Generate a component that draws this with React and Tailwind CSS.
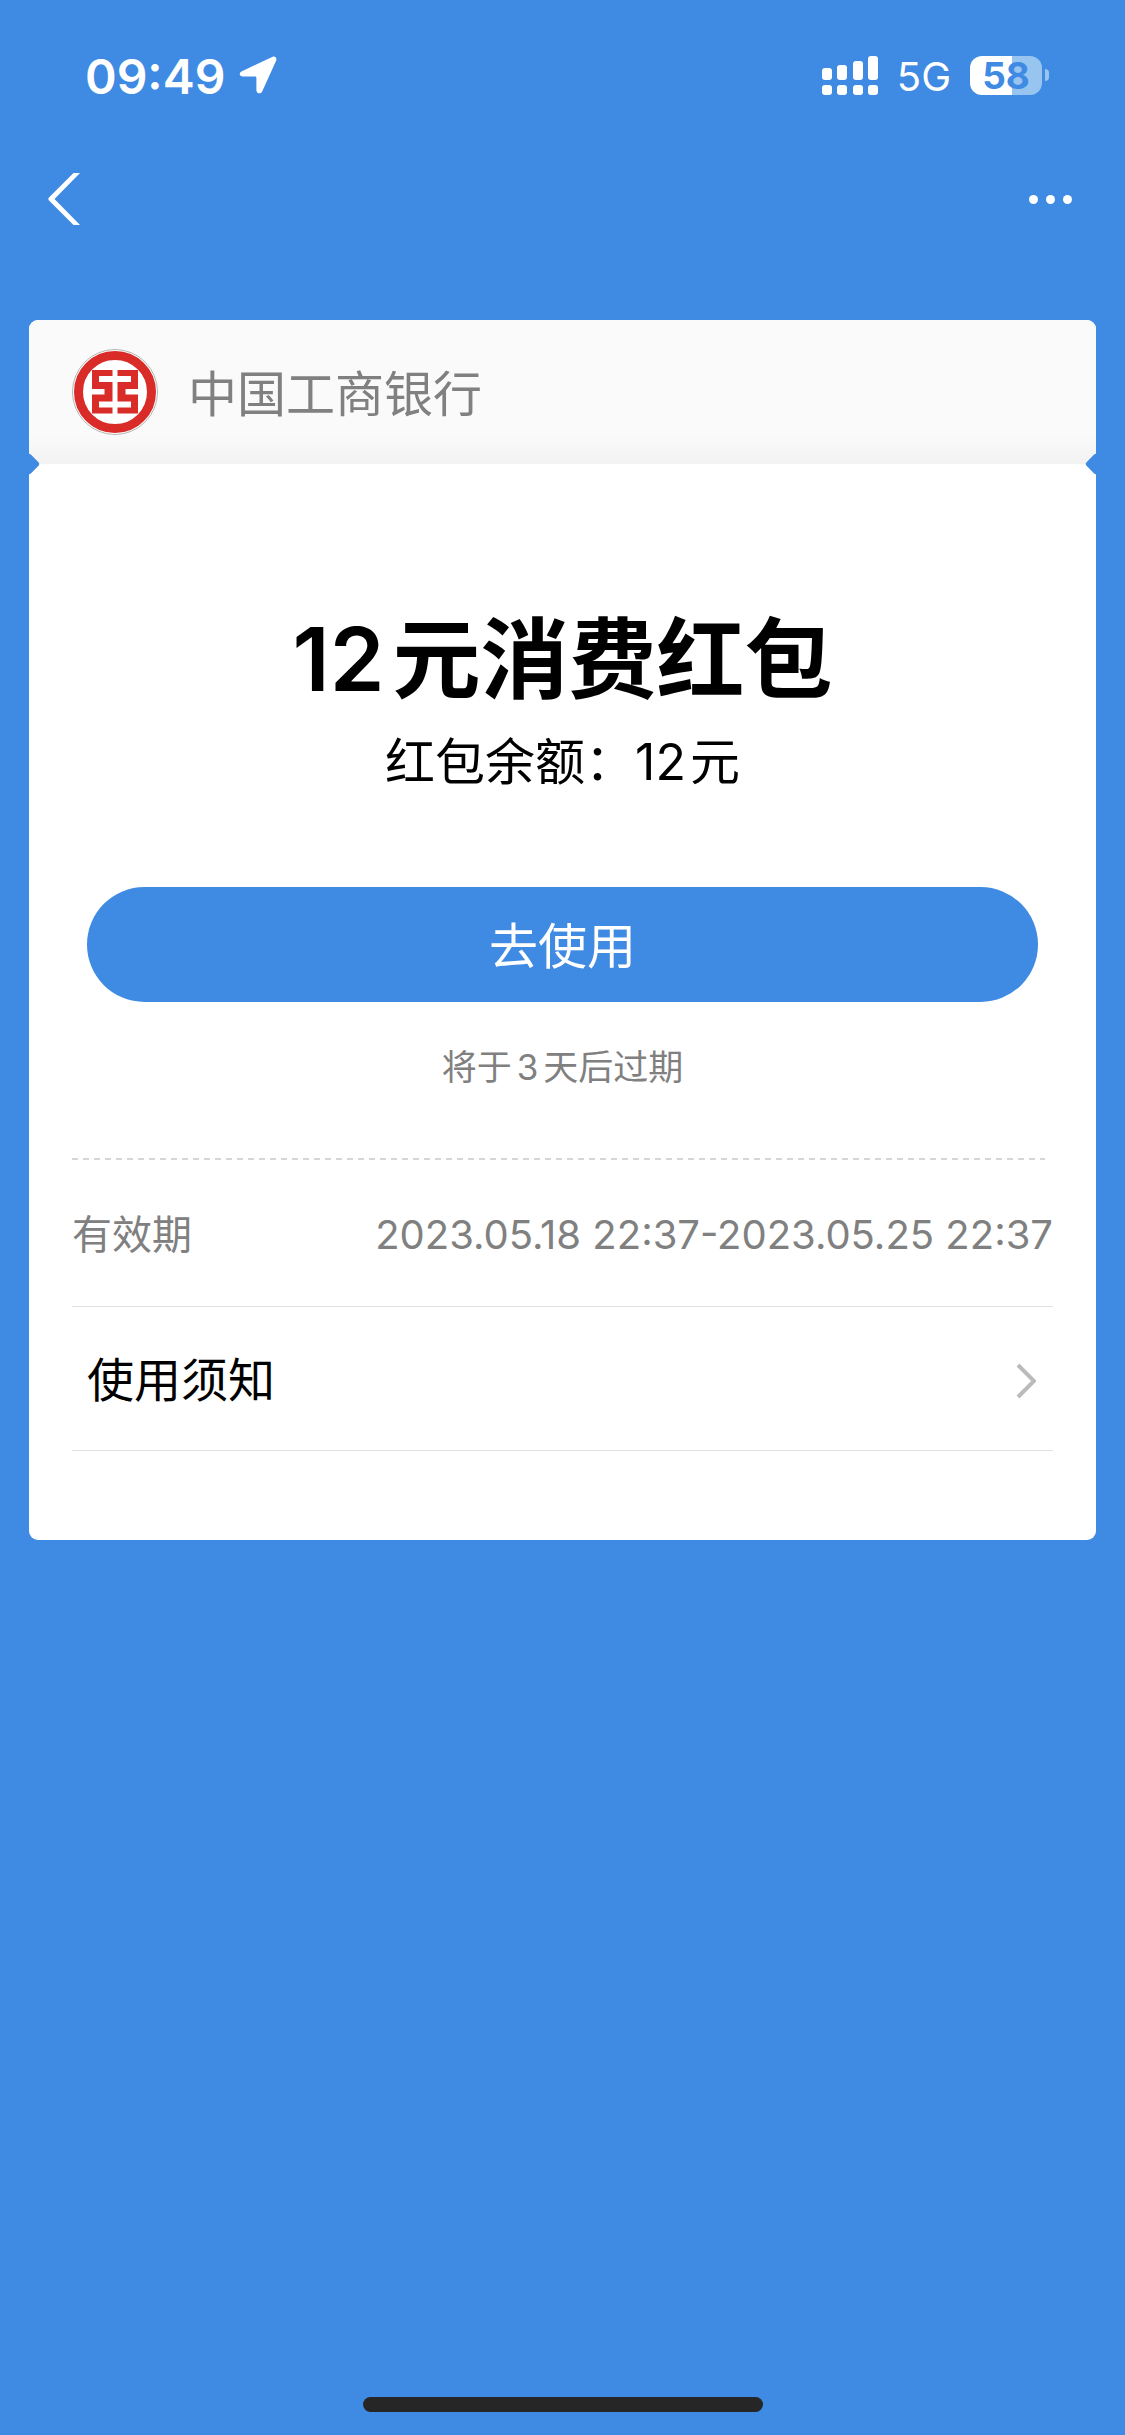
function LocationIcon() {
  return (
    <svg viewBox="0 0 38 38" className="h-[38px] w-[38px]" aria-hidden="true">
      <path
        d="M3 15.2 33.2 .9c3-1.2 5 .9 3.9 3.8L23.3 35.2c-1.4 3.2-5.9 2.6-5.9-1V22.2c0-1.2-.5-1.6-1.6-1.6H4c-4 0-4.300-4-1-5.400Z"
        fill="white"
      />
    </svg>
  );
}

function SignalIcon() {
  return (
    <svg viewBox="0 0 56 39" className="h-[39px] w-14" fill="white" role="img" aria-label="信号">
      <rect x="0" y="12" width="10" height="12" rx="3" />
      <rect x="15" y="9" width="10" height="15" rx="3" />
      <rect x="31" y="5" width="10" height="19" rx="3" />
      <rect x="46" y="0" width="10" height="24" rx="3" />
      <rect x="0" y="29" width="10" height="10" rx="3" />
      <rect x="15" y="29" width="10" height="10" rx="3" />
      <rect x="31" y="29" width="10" height="10" rx="3" />
      <rect x="46" y="29" width="10" height="10" rx="3" />
    </svg>
  );
}

function Battery() {
  return (
    <div className="flex items-center gap-[3px]">
      <div className="flex h-[39px] w-[72px] items-center justify-center rounded-xl bg-linear-to-r from-white from-58% to-[#98c4f0] to-58% text-[37px] font-bold leading-none text-[#3f8be3]">
        58
      </div>
      <div className="h-3 w-1 rounded-r-full bg-[#98c4f0]" />
    </div>
  );
}

function StatusBar() {
  return (
    <div className="flex h-[150px] items-center justify-between pr-[76px] pl-[85px] text-white">
      <div className="flex items-center gap-[14px]">
        <span className="pt-1 text-[48px] font-semibold leading-[52px]">09:49</span>
        <LocationIcon />
      </div>
      <div className="flex items-center gap-[19px]">
        <SignalIcon />
        <span className="pt-1 text-[40px] leading-none">5G</span>
        <Battery />
      </div>
    </div>
  );
}

function NavBar() {
  return (
    <nav className="flex h-[98px] items-center justify-between pr-[53px] pl-12">
      <button type="button" aria-label="返回">
        <svg viewBox="0 0 32 52" className="h-[52px] w-8" aria-hidden="true">
          <path d="M25.500 0H32L6.500 26 32 52H25.500L0.500 27V25Z" fill="white" />
        </svg>
      </button>
      <button type="button" aria-label="更多" className="flex gap-2">
        <span className="size-[9px] rounded-full bg-white" />
        <span className="size-[9px] rounded-full bg-white" />
        <span className="size-[9px] rounded-full bg-white" />
      </button>
    </nav>
  );
}

function BankLogo() {
  return (
    <svg viewBox="0 0 86 86" className="size-[86px]" role="img" aria-label="中国工商银行">
      <circle cx="43" cy="43" r="42.500" fill="white" stroke="#b5b5b5" />
      <circle cx="43" cy="43" r="36.500" fill="white" stroke="#d92b27" strokeWidth="9" />
      <g fill="#d92b27">
        <path d="M20 21H40.500V27H27V33H40.500V52.500H27V58.500H40.500V64.500H20V45.500H32.500V40H20Z" />
        <path d="M66 21H45.500V27H59V33H45.500V52.500H59V58.500H45.500V64.500H66V45.500H53.500V40H66Z" />
      </g>
    </svg>
  );
}

function Notches() {
  return (
    <>
      <span className="absolute -bottom-2 -left-2 size-4 rotate-45 rounded-[3px] bg-[#3f8be3]" />
      <span className="absolute -right-2 -bottom-2 size-4 rotate-45 rounded-[3px] bg-[#3f8be3]" />
    </>
  );
}

export default function App() {
  return (
    <div className="flex min-h-screen flex-col bg-[#3f8be3] font-[Inter,'Noto_Sans_CJK_SC',sans-serif]">
      <StatusBar />
      <NavBar />
      <main className="mx-[29px] mt-[72px] rounded-[9px] bg-white">
        <header className="relative flex h-36 items-center gap-[30px] rounded-t-[9px] bg-linear-to-b from-[#fafafa] from-80% to-[#f2f2f2] pl-[43px]">
          <BankLogo />
          <span className="pt-1 text-[49px] leading-none text-[#808080]">中国工商银行</span>
          <Notches />
        </header>
        <section className="flex flex-col items-center px-[58px] pt-[140px] text-black">
          <h1 className="text-[88px] font-semibold leading-[110px]">
            <span className="mr-2">12</span>元消费红包
          </h1>
          <p className="mt-[10px] text-[50px] leading-[76px]">
            红包余额：<span className="mr-1">12</span>元
          </p>
          <button type="button" className="mt-[87px] h-[115px] w-full rounded-full bg-[#3f8be3] pt-1 text-[49px] text-white">
            去使用
          </button>
          <p className="mt-10 text-[35px] leading-[50px] text-[#808080]">
            将于<span className="mx-[5px]">3</span>天后过期
          </p>
        </section>
        <section className="mx-[43px] mt-[66px] pb-[89px]">
          <div className="mr-2 h-[2px] bg-[repeating-linear-gradient(to_right,#d6d6d6_0_6px,transparent_6px_11px)]" />
          <div className="flex h-[147px] items-center justify-between border-b border-[#e0e0e0] pt-1 text-[40px] text-[#808080]">
            <span>有效期</span>
            <span>2023.05.18 22:37-2023.05.25 22:37</span>
          </div>
          <button type="button" className="flex h-36 w-full items-center justify-between border-b border-[#e0e0e0] pt-1 pr-[17px] pl-[15px] text-[47px] text-black">
            使用须知
            <svg viewBox="0 0 20 36" className="h-9 w-5" aria-hidden="true">
              <path d="M2 2 18 18 2 34" fill="none" stroke="#bbbbbb" strokeWidth="4" />
            </svg>
          </button>
        </section>
      </main>
      <div className="mx-auto mt-auto mb-[23px] h-[15px] w-[400px] rounded-full bg-[#262626]" />
    </div>
  );
}
